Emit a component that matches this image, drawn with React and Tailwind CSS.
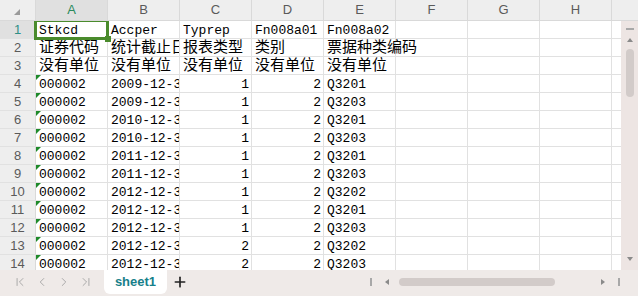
import React from "react";
import { ChevronFirst, ChevronLeft, ChevronRight, ChevronLast, Plus } from "lucide-react";

const columns = ["A", "B", "C", "D", "E", "F", "G", "H"];

// each row: [A, B, C, D, E]
const rows = [
  ["Stkcd", "Accper", "Typrep", "Fn008a01", "Fn008a02"],
  ["证券代码", "统计截止日期", "报表类型", "类别", "票据种类编码"],
  ["没有单位", "没有单位", "没有单位", "没有单位", "没有单位"],
  ["000002", "2009-12-31", 1, 2, "Q3201"],
  ["000002", "2009-12-31", 1, 2, "Q3203"],
  ["000002", "2010-12-31", 1, 2, "Q3201"],
  ["000002", "2010-12-31", 1, 2, "Q3203"],
  ["000002", "2011-12-31", 1, 2, "Q3201"],
  ["000002", "2011-12-31", 1, 2, "Q3203"],
  ["000002", "2012-12-31", 1, 2, "Q3202"],
  ["000002", "2012-12-31", 1, 2, "Q3201"],
  ["000002", "2012-12-31", 1, 2, "Q3203"],
  ["000002", "2012-12-31", 2, 2, "Q3202"],
  ["000002", "2012-12-31", 2, 2, "Q3203"],
];

function Cell({ value, row, col }) {
  const isNumber = typeof value === "number";
  const isCjk = row === 1 || row === 2;
  const textFlag = col === 0 && row >= 3;
  const selected = row === 0 && col === 0;
  const spill = col === 4;

  return (
    <div className="relative w-[72px] h-full shrink-0 border-r border-[#e1e1e1]">
      {textFlag && (
        <div className="absolute top-0 left-0 w-0 h-0 border-t-[5px] border-r-[5px] border-t-[#1e8a2a] border-r-transparent" />
      )}
      {value !== undefined && (
        <div
          className={
            "whitespace-nowrap text-black " +
            (spill ? "overflow-visible " : "overflow-hidden ") +
            (isNumber ? "text-right pr-[2px] " : "pl-[3px] ") +
            (isCjk
              ? "text-[15px] leading-[17px] pt-[1px]"
              : "text-[13px] leading-[14px] pt-[3px]")
          }
        >
          {value}
        </div>
      )}
      {selected && (
        <div className="absolute -left-[2px] -top-[2px] w-[75px] h-[21px] border-[3px] border-[#4a8b2c] z-10">
          <div className="absolute -right-[5px] -bottom-[5px] w-[6px] h-[6px] bg-[#4a8b2c]" />
        </div>
      )}
    </div>
  );
}

function Triangle({ dir }) {
  if (dir === "up")
    return <div className="w-0 h-0 border-l-[3px] border-r-[3px] border-b-[4px] border-l-transparent border-r-transparent border-b-[#8a8a8a]" />;
  if (dir === "down")
    return <div className="w-0 h-0 border-l-[3px] border-r-[3px] border-t-[4px] border-l-transparent border-r-transparent border-t-[#8a8a8a]" />;
  if (dir === "left")
    return <div className="w-0 h-0 border-t-[3px] border-b-[3px] border-r-[4px] border-t-transparent border-b-transparent border-r-[#8a8a8a]" />;
  return <div className="w-0 h-0 border-t-[3px] border-b-[3px] border-l-[4px] border-t-transparent border-b-transparent border-l-[#8a8a8a]" />;
}

export default function App() {
  return (
    <div
      className="w-[638px] h-[296px] bg-white flex flex-col overflow-hidden"
      style={{ fontFamily: '"Liberation Mono", "Noto Sans CJK SC", monospace' }}
    >
      {/* column headers */}
      <div
        className="flex h-[21px] shrink-0 bg-[#eeeeee] border-b border-[#d9d9d9] text-[13px] text-[#5a5a5a]"
        style={{ fontFamily: '"Liberation Sans", "Noto Sans", sans-serif' }}
      >
        <div className="relative w-[36px] shrink-0 border-r border-[#d9d9d9]">
          {/* select-all corner mark */}
          <div className="absolute right-[15px] bottom-[5px] w-0 h-0 border-l-[6px] border-b-[6px] border-l-transparent border-b-[#9a9a9a]" />
        </div>
        {columns.map((c) => (
          <div
            key={c}
            className={
              "w-[72px] shrink-0 flex items-center justify-center border-r border-[#d9d9d9] " +
              (c === "A" ? "bg-[#e0e0e0] text-[#2b8a5c]" : "")
            }
          >
            {c}
          </div>
        ))}
        <div className="flex-1" />
      </div>

      <div className="flex flex-1 min-h-0">
        {/* sheet grid */}
        <div className="w-[621px] overflow-hidden">
          {rows.map((r, i) => (
            <div key={i} className="flex h-[18px] border-b border-[#e1e1e1]">
              <div
                className={
                  "w-[36px] shrink-0 flex items-center justify-center border-r border-[#d9d9d9] text-[13px] " +
                  (i === 0 ? "bg-[#e0e0e0] text-[#2e8f86]" : "bg-[#eeeeee] text-[#5a5a5a]")
                }
                style={{ fontFamily: '"Liberation Sans", "Noto Sans", sans-serif' }}
              >
                {i + 1}
              </div>
              {columns.map((c, j) => (
                <Cell key={c} value={r[j]} row={i} col={j} />
              ))}
              <div className="w-[10px] shrink-0 border-r border-[#e1e1e1]" />
            </div>
          ))}
        </div>

        {/* vertical scrollbar */}
        <div className="w-[17px] bg-[#ede5e3] flex flex-col items-center pt-[7px] pb-[9px]">
          <div className="w-[8px] h-[2px] bg-[#a8a8a8]" />
          <div className="mt-[8px]">
            <Triangle dir="up" />
          </div>
          <div className="mt-[7px] w-[8px] h-[48px] rounded-full bg-[#d2cbc9]" />
          <div className="flex-1" />
          <Triangle dir="down" />
        </div>
      </div>

      {/* sheet tabs and horizontal scrollbar */}
      <div className="h-[26px] shrink-0 bg-[#efeae8] flex items-start">
        <div className="flex items-center h-[24px] pl-[13px] gap-[8px] text-[#a0a0a0]">
          <ChevronFirst size={14} strokeWidth={1.5} />
          <ChevronLeft size={14} strokeWidth={1.5} />
          <ChevronRight size={14} strokeWidth={1.5} />
          <ChevronLast size={14} strokeWidth={1.5} />
        </div>
        <div
          className="ml-[11px] w-[63px] h-[24px] bg-white rounded-b-[6px] flex items-center justify-center text-[13px] font-bold text-[#17808a]"
          style={{ fontFamily: '"Liberation Sans", "Noto Sans", sans-serif' }}
        >
          sheet1
        </div>
        <div className="ml-[5px] h-[24px] flex items-center text-[#222]">
          <Plus size={16} strokeWidth={2.5} />
        </div>
        <div className="ml-[182px] h-[24px] flex items-center">
          <div className="w-[2px] h-[8px] bg-[#a8a8a8]" />
          <div className="ml-[13px]">
            <Triangle dir="left" />
          </div>
          <div className="ml-[10px] w-[156px] h-[8px] rounded-full bg-[#d2cbc9]" />
          <div className="ml-[46px]">
            <Triangle dir="right" />
          </div>
          <div className="ml-[13px] w-[2px] h-[8px] bg-[#a8a8a8]" />
        </div>
      </div>
    </div>
  );
}
